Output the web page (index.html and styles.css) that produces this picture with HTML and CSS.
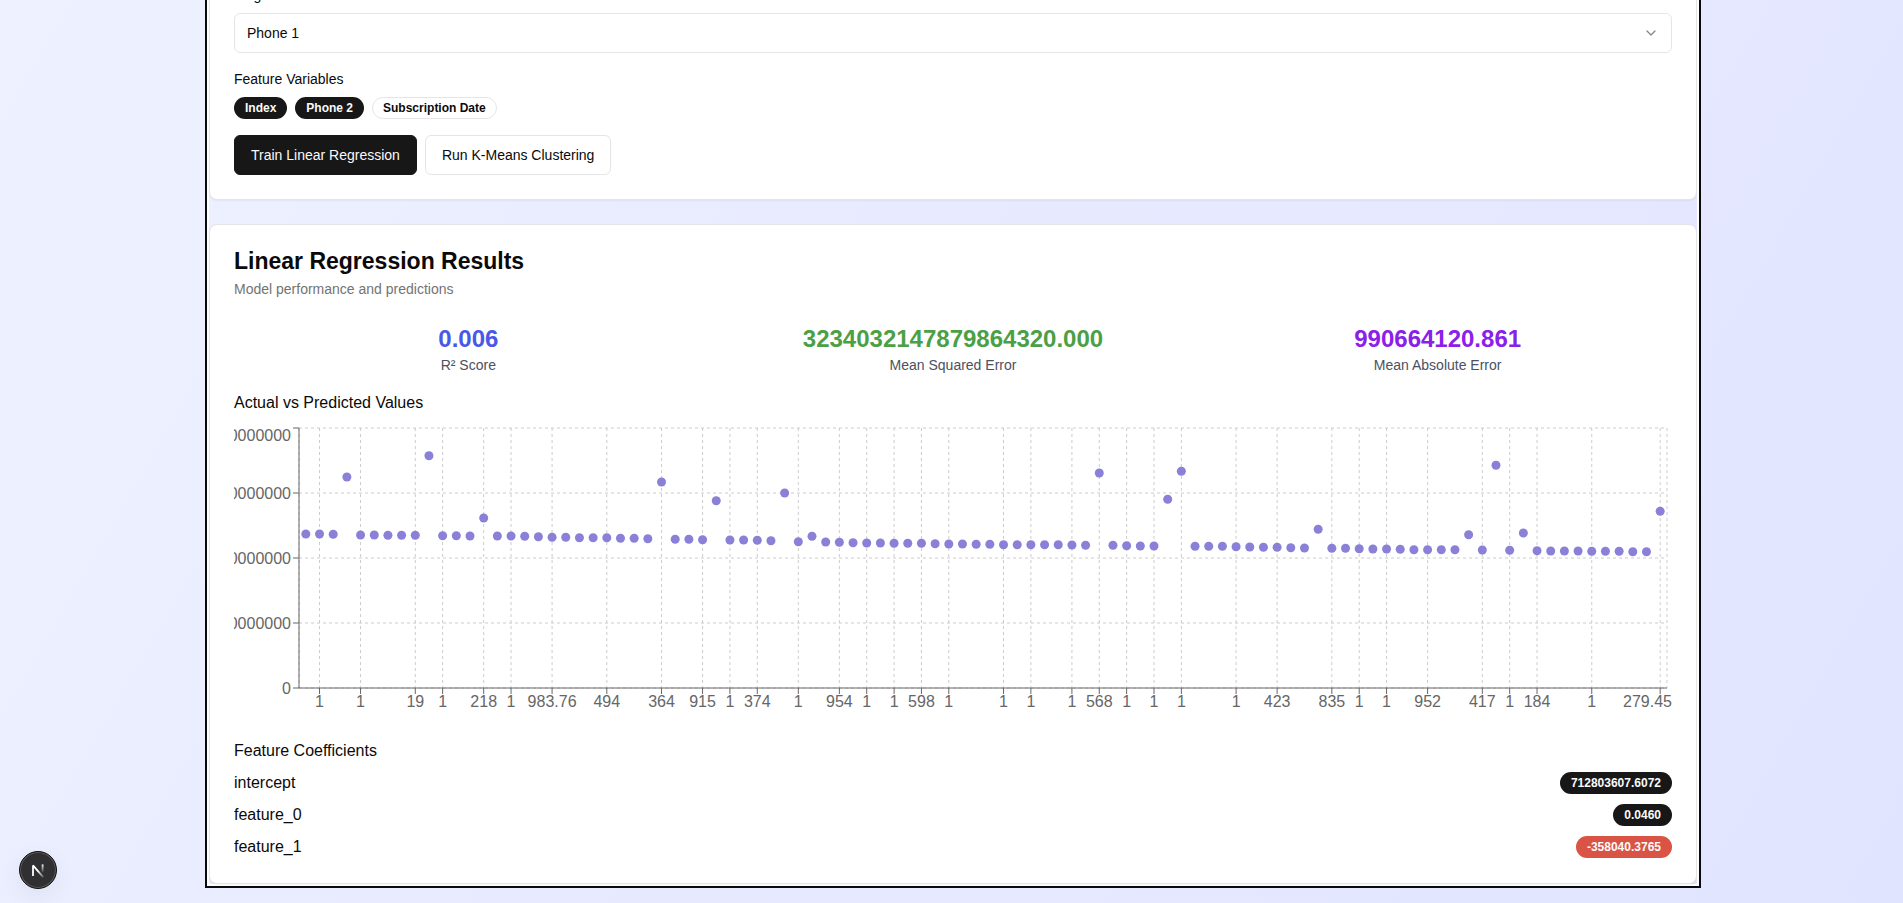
FILE: index.html
```html
<!DOCTYPE html>
<html lang="en">
<head>
    <meta charset="UTF-8">
    <meta name="viewport" content="width=device-width, initial-scale=1.0">
    <title>Linear Regression Results</title>
    <link rel="stylesheet" href="styles.css">
</head>
<body>
    <main class="page">
        <div class="panel">
            <section class="card">
                <div class="field">
                    <label class="label" for="target">Target Variable</label>
                    <div class="select-wrap">
                        <select class="select" id="target">
                            <option>Phone 1</option>
                        </select>
                        <svg class="chevron" width="16" height="16" viewBox="0 0 24 24" aria-hidden="true">
                            <path d="m6 9 6 6 6-6" fill="none" stroke="currentColor" stroke-width="2" stroke-linecap="round" stroke-linejoin="round"/>
                        </svg>
                    </div>
                </div>
                <div class="field">
                    <span class="label" id="features-label">Feature Variables</span>
                    <div class="badges" role="group" aria-labelledby="features-label">
                        <button type="button" class="badge badge-dark">Index</button>
                        <button type="button" class="badge badge-dark">Phone 2</button>
                        <button type="button" class="badge badge-outline">Subscription Date</button>
                    </div>
                </div>
                <div class="actions">
                    <button type="button" class="button button-primary">Train Linear Regression</button>
                    <button type="button" class="button button-outline">Run K-Means Clustering</button>
                </div>
            </section>

            <section class="card">
                <header class="card-header">
                    <h3 class="card-title">Linear Regression Results</h3>
                    <p class="card-description">Model performance and predictions</p>
                </header>
                <div class="stats">
                    <div class="stat">
                        <div class="stat-value blue">0.006</div>
                        <div class="stat-label">R² Score</div>
                    </div>
                    <div class="stat">
                        <div class="stat-value green">3234032147879864320.000</div>
                        <div class="stat-label">Mean Squared Error</div>
                    </div>
                    <div class="stat">
                        <div class="stat-value purple">990664120.861</div>
                        <div class="stat-label">Mean Absolute Error</div>
                    </div>
                </div>
                <div class="section">
                    <h4 class="section-title">Actual vs Predicted Values</h4>
                    <svg class="chart" id="chart" role="img" aria-label="Actual vs Predicted Values"></svg>
                </div>
                <div class="section">
                    <h4 class="section-title">Feature Coefficients</h4>
                    <div class="coefficients">
                        <div class="coefficient">
                            <span>intercept</span>
                            <span class="badge badge-dark">712803607.6072</span>
                        </div>
                        <div class="coefficient">
                            <span>feature_0</span>
                            <span class="badge badge-dark">0.0460</span>
                        </div>
                        <div class="coefficient">
                            <span>feature_1</span>
                            <span class="badge badge-red">-358040.3765</span>
                        </div>
                    </div>
                </div>
            </section>
        </div>
    </main>

    <button type="button" class="dev-button" aria-label="Open dev tools">
        <svg width="36" height="36" viewBox="0 0 36 36" fill="none" aria-hidden="true">
            <defs>
                <linearGradient id="fade-diagonal" x1="18" y1="19" x2="24" y2="26" gradientUnits="userSpaceOnUse">
                    <stop stop-color="#fff"/>
                    <stop offset="1" stop-color="#fff" stop-opacity="0.1"/>
                </linearGradient>
                <linearGradient id="fade-stem" x1="23" y1="12" x2="23" y2="21" gradientUnits="userSpaceOnUse">
                    <stop stop-color="#fff"/>
                    <stop offset="1" stop-color="#fff" stop-opacity="0"/>
                </linearGradient>
            </defs>
            <path d="M13 24V13.4L23.2 25.2" stroke="url(#fade-diagonal)" stroke-width="1.8" stroke-linejoin="bevel"/>
            <path d="M22.6 12.4V20.5" stroke="url(#fade-stem)" stroke-width="1.8"/>
        </svg>
    </button>

    <script src="script.js"></script>
</body>
</html>
```

FILE: styles.css
```css
* {
    box-sizing: border-box;
}

body {
    margin: 0;
    min-height: 100vh;
    overflow: hidden;
    font-family: "Liberation Sans", Arial, sans-serif;
    font-size: 16px;
    line-height: 24px;
    color: #0a0a0a;
    background: linear-gradient(120deg, #eef2ff, #e9ecff 35%, #e1e4ff);
}

h3,
h4,
p {
    margin: 0;
    font-weight: 400;
}

button,
select {
    font-family: inherit;
    color: inherit;
    cursor: pointer;
}

.page {
    padding-left: 3px;
}

/* the panel is scrolled: its first label is half above the window */
.panel {
    display: flex;
    flex-direction: column;
    gap: 24px;
    max-width: 1488px;
    margin: -40px auto 0;
    box-shadow: 0 0 0 2px #fff, 0 0 0 4px #0a0a0a;
}

.card {
    display: flex;
    flex-direction: column;
    gap: 16px;
    padding: 24px;
    background-color: #fff;
    border: 1px solid #e5e5e5;
    border-radius: 8px;
    box-shadow: 0 1px 2px rgba(0, 0, 0, 0.05);
}

.field {
    display: flex;
    flex-direction: column;
    gap: 8px;
}

.label {
    font-size: 14px;
    line-height: 20px;
}

.select-wrap {
    position: relative;
}

.select {
    display: block;
    width: 100%;
    height: 40px;
    padding: 0 12px;
    font-size: 14px;
    appearance: none;
    background-color: #fff;
    border: 1px solid #e5e5e5;
    border-radius: 6px;
}

.chevron {
    position: absolute;
    top: 12px;
    right: 13px;
    color: #888;
    pointer-events: none;
}

.badges,
.actions {
    display: flex;
    gap: 8px;
}

.badge {
    padding: 2px 10px;
    font-size: 12px;
    font-weight: 700;
    line-height: 16px;
    border: 1px solid transparent;
    border-radius: 11px;
}

.badge-dark {
    background-color: #171717;
    color: #fafafa;
}

.badge-outline {
    background-color: #fff;
    border-color: #e5e5e5;
}

.badge-red {
    background-color: #d95445;
    color: #fafafa;
}

.button {
    height: 40px;
    padding: 0 16px;
    font-size: 14px;
    border: 1px solid #e5e5e5;
    border-radius: 6px;
}

.button-primary {
    background-color: #171717;
    border-color: #171717;
    color: #fafafa;
}

.button-outline {
    background-color: #fff;
}

.card-header {
    display: flex;
    flex-direction: column;
    gap: 6px;
    margin-bottom: 8px;
}

.card-title {
    font-size: 23px;
    font-weight: 700;
    line-height: 24px;
}

.card-description {
    font-size: 14px;
    line-height: 20px;
    color: #737373;
}

.stats {
    display: grid;
    grid-template-columns: repeat(3, 1fr);
    gap: 16px;
    text-align: center;
}

.stat-value {
    font-size: 24px;
    font-weight: 700;
    line-height: 32px;
}

.stat-label {
    font-size: 14px;
    line-height: 20px;
    color: #4b5162;
}

.blue {
    color: #4a58e8;
}

.green {
    color: #4ba046;
}

.purple {
    color: #8a20ea;
}

.section {
    display: flex;
    flex-direction: column;
    gap: 8px;
}

.section-title {
    font-size: 16px;
}

.chart {
    display: block;
    width: 100%;
    height: 300px;
    overflow: hidden;
    font-size: 16px;
}

.chart text {
    fill: #666;
}

.grid line {
    stroke: #ccc;
    stroke-dasharray: 3 3;
}

.axis line {
    stroke: #666;
}

.dots circle {
    fill: #8b80d8;
}

.coefficients {
    display: flex;
    flex-direction: column;
    gap: 8px;
}

.coefficient {
    display: flex;
    align-items: center;
    justify-content: space-between;
}

.dev-button {
    position: fixed;
    bottom: 14px;
    left: 19px;
    display: grid;
    place-items: center;
    width: 38px;
    height: 38px;
    padding: 0;
    background-color: #303032;
    border: 1px solid #111;
    border-radius: 50%;
    box-shadow: inset 0 0 0 1px #5c5c5e, 0 8px 24px rgba(0, 0, 0, 0.06);
}
```

FILE: script.js
```js
const svg = document.getElementById('chart');

// dot heights, in pixels from the top of the chart
const dots = [
    111, 111, 111.3, 54, 112, 112, 112.3, 112.3, 112.3, 32.7,
    112.7, 112.7, 113, 95, 113, 113, 113.3, 113.7, 114.3, 114.3,
    114.7, 114.7, 114.7, 115.3, 115.3, 115.7, 59, 116.3, 116.3, 116.7,
    77.7, 117, 117, 117.3, 117.7, 70, 118.7, 113.3, 119, 119.3,
    119.7, 120, 120, 120.3, 120.3, 120.3, 120.7, 121, 121, 121.3,
    121.3, 121.7, 121.7, 121.7, 121.7, 121.7, 122, 122.3, 50, 122.3,
    122.7, 123, 123, 76.3, 48.3, 123.3, 123.3, 123.3, 123.7, 124,
    124.3, 124.3, 124.7, 125, 106.3, 125.3, 125.3, 125.7, 126, 126,
    126.3, 126.7, 126.7, 126.7, 126.7, 111.7, 127, 42.3, 127.3, 110,
    127.7, 128, 128, 128, 128.3, 128.3, 128.3, 128.7, 128.7, 88.3
];

const xTicks = {
    1: '1', 4: '1', 8: '19', 10: '1', 13: '218', 15: '1', 18: '983.76', 22: '494', 26: '364',
    29: '915', 31: '1', 33: '374', 36: '1', 39: '954', 41: '1', 43: '1', 45: '598', 47: '1',
    51: '1', 53: '1', 56: '1', 58: '568', 60: '1', 62: '1', 64: '1', 68: '1', 71: '423',
    75: '835', 77: '1', 79: '1', 82: '952', 86: '417', 88: '1', 90: '184', 94: '1', 99: '279.45'
};

const yTicks = ['0', '3000000000', '6000000000', '9000000000', '12000000000'];

function line(x1, y1, x2, y2) {
    return `<line x1="${x1}" y1="${y1}" x2="${x2}" y2="${y2}"/>`;
}

function text(x, y, anchor, label) {
    return `<text x="${x}" y="${y}" text-anchor="${anchor}">${label}</text>`;
}

function drawChart() {
    const width = svg.clientWidth;
    const left = 65;
    const right = width - 5;
    const top = 5;
    const bottom = 265;
    const step = (right - left) / dots.length;
    let grid = '';
    let axis = line(left, bottom, right, bottom) + line(left, top, left, bottom);
    let labels = '';

    yTicks.forEach((label, i) => {
        const y = bottom - i * (bottom - top) / (yTicks.length - 1);
        // keep the top label inside the chart
        const labelY = Math.max(y, 12);
        grid += line(left, y, right, y);
        axis += line(left - 6, y, left, y);
        labels += text(left - 8, labelY + 6, 'end', label);
    });

    Object.keys(xTicks).forEach((i) => {
        const x = left + (Number(i) + 0.5) * step;
        grid += line(x, top, x, bottom);
        axis += line(x, bottom, x, bottom + 6);
        if (Number(i) === dots.length - 1) {
            labels += text(width, bottom + 19, 'end', xTicks[i]);
        } else {
            labels += text(x, bottom + 19, 'middle', xTicks[i]);
        }
    });
    grid += line(left, top, left, bottom) + line(right, top, right, bottom);

    const circles = dots.map((y, i) => `<circle cx="${left + (i + 0.5) * step}" cy="${y}" r="4.5"/>`).join('');

    svg.innerHTML = `<g class="grid">${grid}</g><g class="axis">${axis}</g><g>${labels}</g><g class="dots">${circles}</g>`;
}

drawChart();
window.addEventListener('resize', drawChart);
```
